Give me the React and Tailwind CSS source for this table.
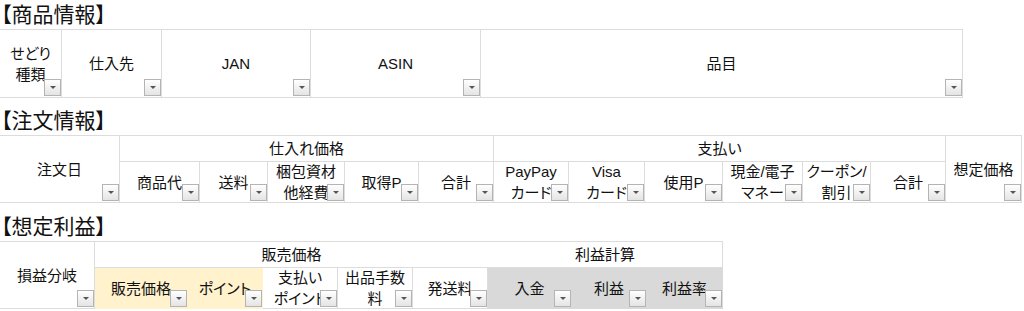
import React from "react";

const Drop = () => (
  <span className="absolute right-0 bottom-[1px] flex h-[17px] w-[17px] items-center justify-center border border-[#b4b4b4] bg-linear-to-b from-white to-[#e4e4e4]">
    <span className="h-0 w-0 border-x-[3px] border-t-[3px] border-x-transparent border-t-[#555]" />
  </span>
);

const tones = {
  w: "border-[#dcdcdc] bg-white",
  y: "border-[#fff2cc] bg-[#fff2cc]",
  g: "border-[#d9d9d9] bg-[#d9d9d9]",
};

const Cell = ({ children, drop, tone = "w", open, span = "" }) => (
  <div
    className={`relative flex items-center justify-center text-center leading-[21px] ${
      open ? "border-b" : "border-r border-b"
    } ${tones[tone]} ${span}`}
  >
    <div className="whitespace-nowrap">{children}</div>
    {drop && <Drop />}
  </div>
);

const Title = ({ children, top }) => (
  <div className={`${top} h-[28px] pl-[1px] text-[21px] leading-[28px]`}>
    {children}
  </div>
);

export default function App() {
  return (
    <div className="h-[311px] w-[1024px] overflow-hidden bg-white font-['Liberation_Sans','Noto_Sans_CJK_JP',sans-serif] text-[15px] text-[#111] [font-feature-settings:'palt']">
      <div className="h-[29px] pl-[1px] text-[21px] leading-[29px]">【商品情報】</div>
      <div className="grid w-fit grid-cols-[62px_100px_149px_170px_482px] grid-rows-[68px] border-t border-[#dcdcdc]">
        <Cell drop>
          せどり
          <br />
          種類
        </Cell>
        <Cell drop>仕入先</Cell>
        <Cell drop>JAN</Cell>
        <Cell drop>ASIN</Cell>
        <Cell drop>品目</Cell>
      </div>

      <Title top="mt-[9px]">【注文情報】</Title>
      <div className="grid w-fit grid-cols-[120px_80px_68px_77px_74px_75px_75px_76px_78px_80px_68px_75px_76px] grid-rows-[26px_41px] border-t border-[#dcdcdc]">
        <Cell drop span="row-span-2">注文日</Cell>
        <Cell span="col-span-5">仕入れ価格</Cell>
        <Cell span="col-span-6">支払い</Cell>
        <Cell drop span="row-span-2">想定価格</Cell>
        <Cell drop>商品代</Cell>
        <Cell drop>送料</Cell>
        <Cell drop>
          梱包資材
          <br />
          他経費
        </Cell>
        <Cell drop>取得P</Cell>
        <Cell drop>合計</Cell>
        <Cell drop>
          PayPay
          <br />
          カード
        </Cell>
        <Cell drop>
          Visa
          <br />
          カード
        </Cell>
        <Cell drop>使用P</Cell>
        <Cell drop>
          現金/電子
          <br />
          マネー
        </Cell>
        <Cell drop>
          クーポン/
          <br />
          割引
        </Cell>
        <Cell drop>合計</Cell>
      </div>

      <Title top="mt-[10px]">【想定利益】</Title>
      <div className="grid w-fit grid-cols-[95px_93px_75px_75px_75px_75px_84px_75px_76px] grid-rows-[26px_41px] border-t border-[#dcdcdc]">
        <Cell drop span="row-span-2">損益分岐</Cell>
        <Cell open span="col-span-5">販売価格</Cell>
        <Cell span="col-span-3">利益計算</Cell>
        <Cell drop tone="y">販売価格</Cell>
        <Cell drop tone="y">ポイント</Cell>
        <Cell drop>
          支払い
          <br />
          ポイント
        </Cell>
        <Cell drop>
          出品手数
          <br />
          料
        </Cell>
        <Cell drop>発送料</Cell>
        <Cell drop tone="g">入金</Cell>
        <Cell drop tone="g">利益</Cell>
        <Cell drop tone="g">利益率</Cell>
      </div>
    </div>
  );
}
